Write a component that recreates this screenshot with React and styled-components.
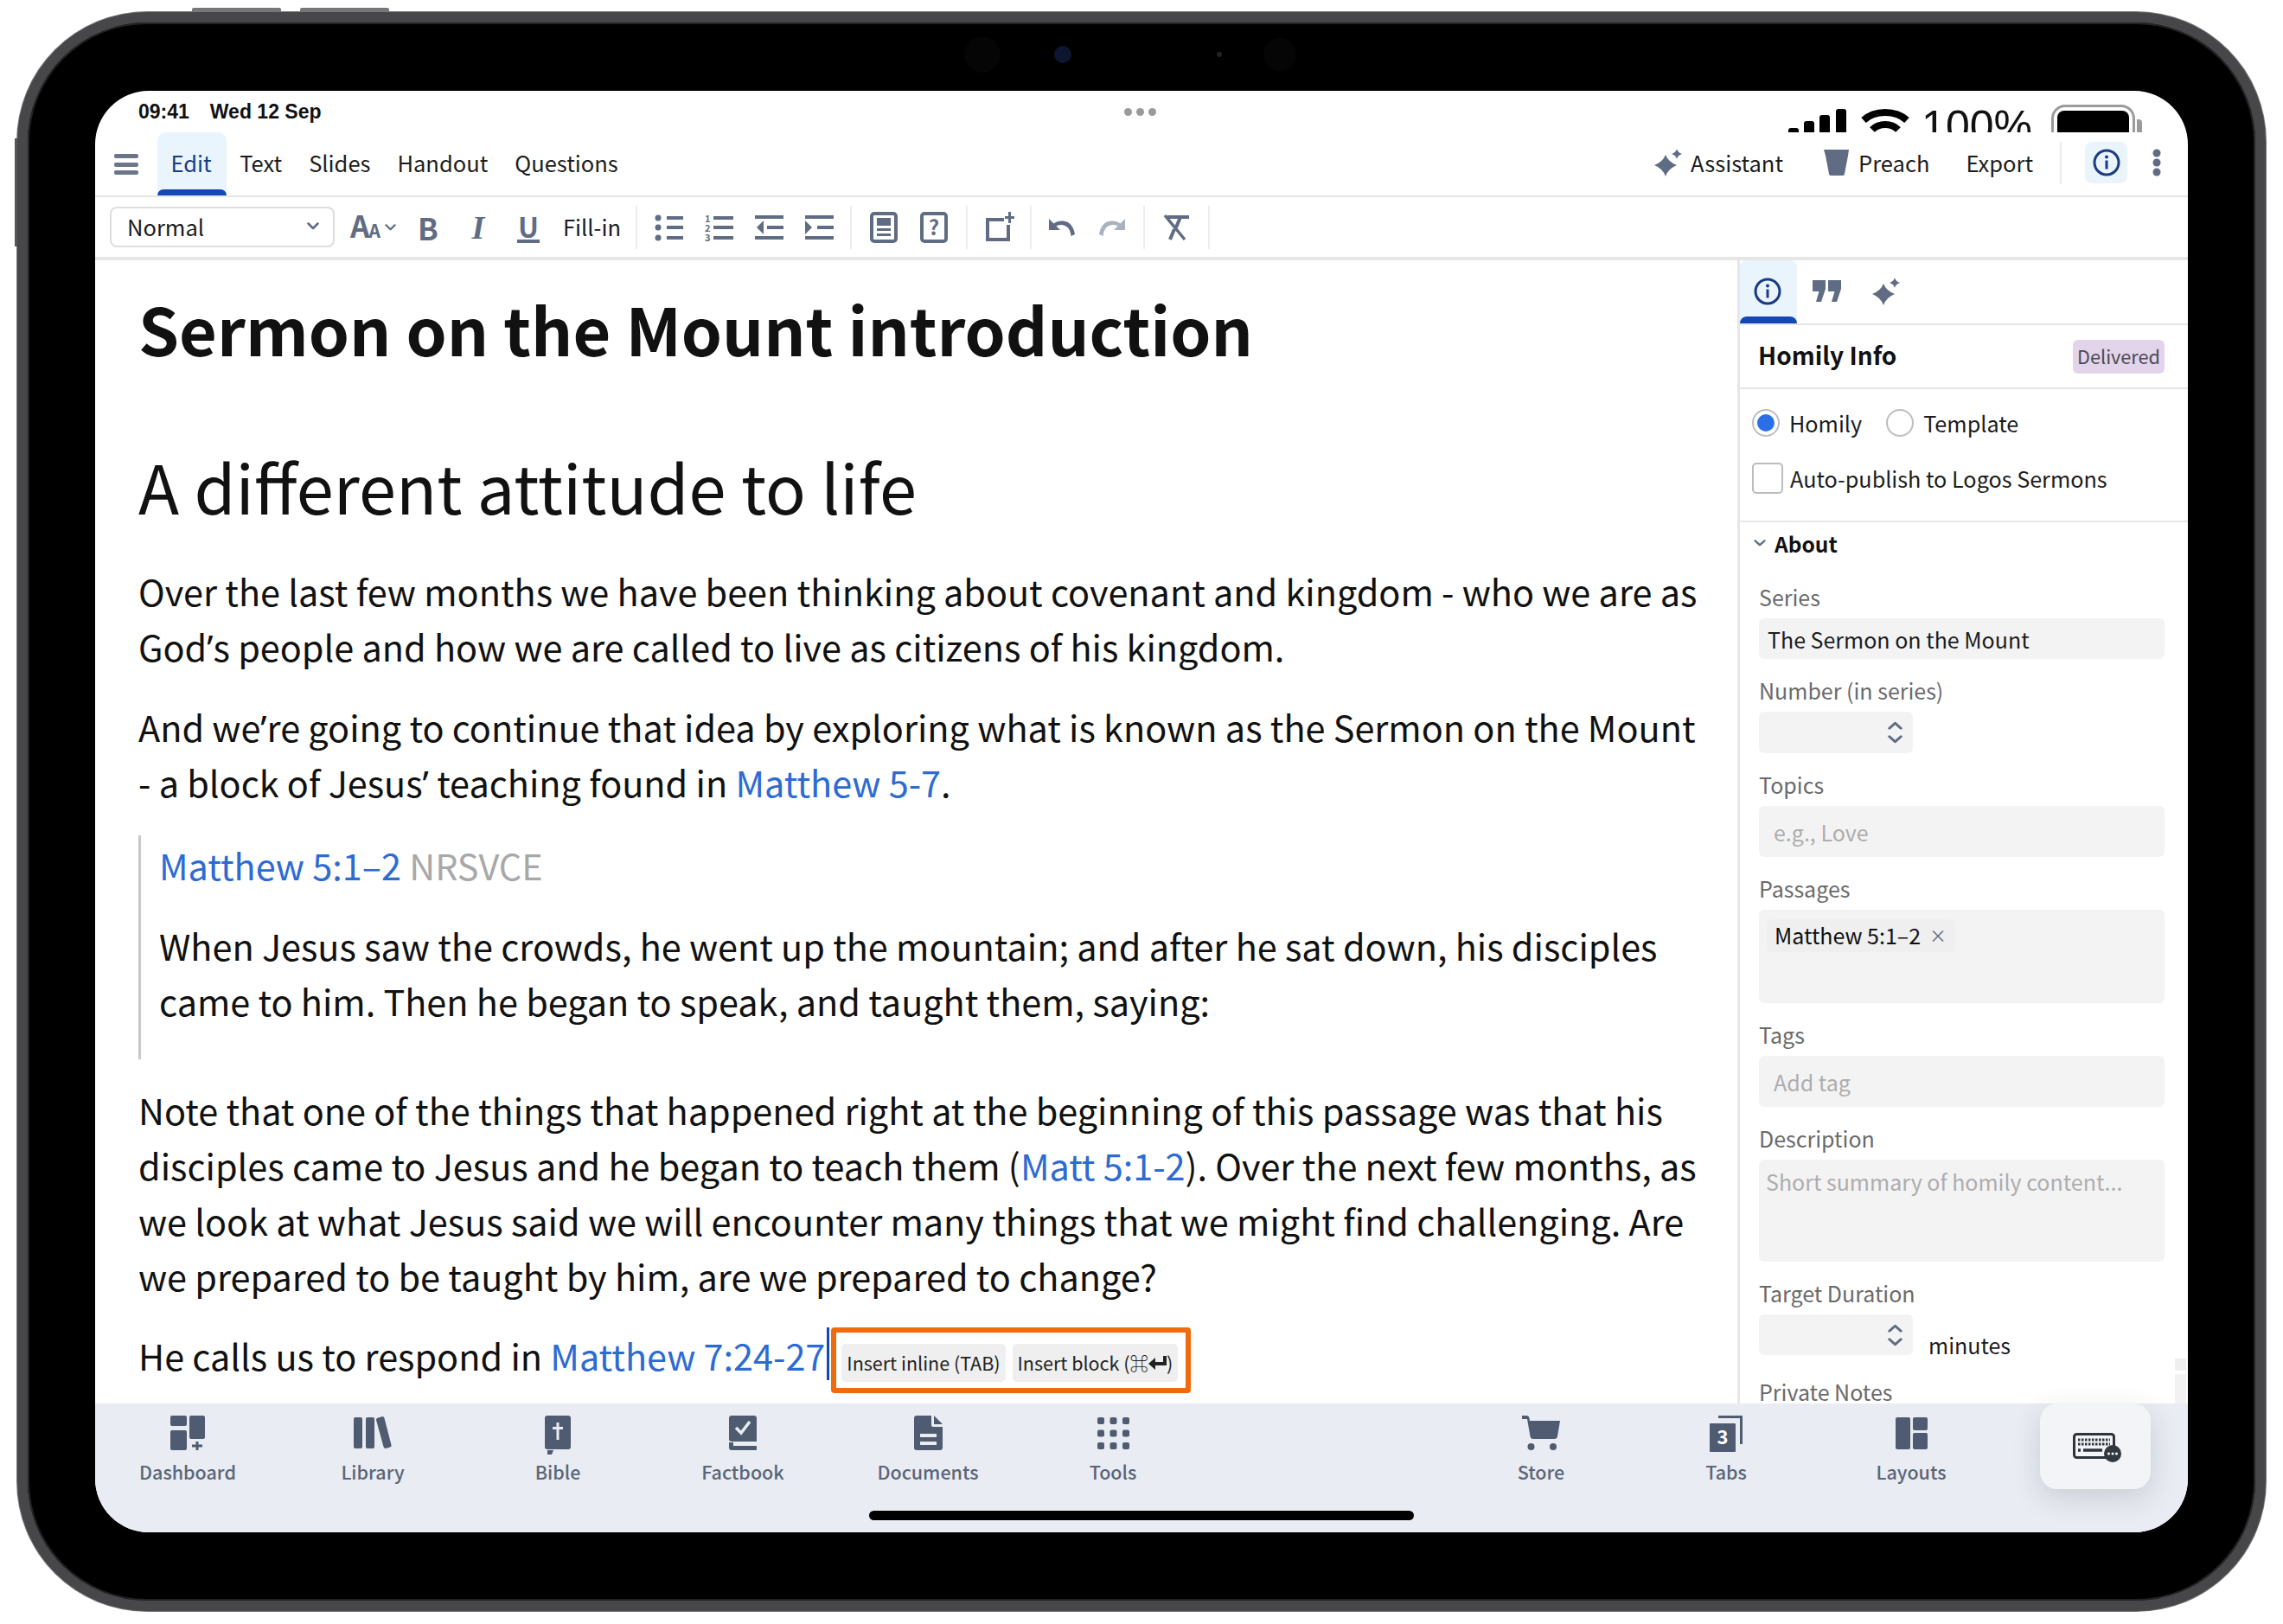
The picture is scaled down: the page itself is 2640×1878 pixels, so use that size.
import React from "react";
import styled, { createGlobalStyle } from "styled-components";

const sans = `"Noto Sans CJK SC", "Noto Sans", sans-serif`;
const slate = "#5f6c83";
const navy = "#1b3b82";
const line = "#e6e6e6";
const link = "#2d6bd3";

const Global = createGlobalStyle`
    html, body {
        margin: 0;
        padding: 0;
        background: #ffffff;
    }
    body {
        width: 2640px;
        height: 1878px;
        overflow: hidden;
        font-family: ${sans};
        color: #111;
    }
    * {
        box-sizing: border-box;
    }
`;

const Device = styled.div`
    position: relative;
    width: 2600px;
    height: 1849px;
    margin: 14px 0 0 20px;
    padding: 79px 78px;
    background: #000;
    border: 12px solid #47474a;
    border-radius: 150px;
    box-shadow: inset 0 0 0 2px #232325, 0 0 0 1px #77777a;
`;

const TopKey = styled.div`
    position: absolute;
    top: -17px;
    left: ${(p) => p.$left}px;
    width: 103px;
    height: 5px;
    background: #77777a;
    border-radius: 2px 2px 0 0;
`;

const SideKey = styled.div`
    position: absolute;
    left: -15px;
    top: 134px;
    width: 3px;
    height: 125px;
    background: #55555a;
`;

const Lens = styled.div`
    position: absolute;
    top: ${(p) => 37 - p.$size / 2}px;
    left: ${(p) => p.$left - p.$size / 2}px;
    width: ${(p) => p.$size}px;
    height: ${(p) => p.$size}px;
    border-radius: 50%;
    background: ${(p) => p.$color};
`;

const Screen = styled.div`
    width: 100%;
    height: 100%;
    background: #fff;
    border-radius: 62px;
    overflow: hidden;
    display: flex;
    flex-direction: column;
`;

const StatusBar = styled.div`
    flex: 0 0 48px;
    height: 48px;
    overflow: hidden;
    display: grid;
    grid-template-columns: 1fr auto 1fr;
    align-items: center;
    padding: 0 53px 0 50px;
`;

const StatusLeft = styled.div`
    display: flex;
    gap: 24px;
    font-family: "Liberation Sans", sans-serif;
    font-size: 23px;
    font-weight: 700;
`;

const Handle = styled.div`
    display: flex;
    gap: 5px;
`;

const HandleDot = styled.span`
    width: 9px;
    height: 9px;
    border-radius: 50%;
    background: #9a9a9a;
`;

const StatusRight = styled.div`
    display: flex;
    justify-content: flex-end;
    align-items: flex-start;
    align-self: start;
    height: 48px;
    padding-top: 16px;
`;

const Percent = styled.span`
    font-family: "Liberation Sans", sans-serif;
    font-size: 50px;
    line-height: 50px;
    margin: 0 22px 0 14px;
`;

const Battery = styled.div`
    display: flex;
    align-items: center;
    height: 60px;
    gap: 2px;
`;

const BatteryShell = styled.div`
    width: 97px;
    height: 60px;
    padding: 4px;
    border: 3px solid #9b9b9b;
    border-radius: 16px;
    &::before {
        content: "";
        display: block;
        height: 100%;
        background: #000;
        border-radius: 8px;
    }
`;

const BatteryCap = styled.div`
    width: 6px;
    height: 26px;
    background: #9b9b9b;
    border-radius: 0 4px 4px 0;
`;

const TabRow = styled.div`
    flex: 0 0 75px;
    height: 75px;
    display: flex;
    align-items: center;
    padding-left: 22px;
    border-bottom: 2px solid ${line};
`;

const Burger = styled.svg`
    color: #6b7688;
    margin-right: 22px;
`;

const Tab = styled.div`
    position: relative;
    align-self: stretch;
    display: flex;
    align-items: center;
    padding: 0 ${(p) => (p.$active ? "17px" : "15.5px")} 3px 15.5px;
    font-size: 25.5px;
    line-height: 36px;
    color: ${(p) => (p.$active ? navy : "#1c1c1c")};
    background: ${(p) => (p.$active ? "#e9f4fd" : "transparent")};
    border-radius: 10px 10px 0 0;
    &::after {
        content: "";
        display: ${(p) => (p.$active ? "block" : "none")};
        position: absolute;
        left: 0;
        right: 0;
        bottom: 0;
        height: 7px;
        background: #1546b5;
        border-radius: 8px 8px 0 0;
    }
`;

const Actions = styled.div`
    margin-left: auto;
    display: flex;
    align-items: center;
    padding-right: 30px;
    padding-bottom: 3px;
`;

const Action = styled.div`
    display: flex;
    align-items: center;
    gap: ${(p) => p.$gap || 10}px;
    margin-right: ${(p) => p.$after}px;
    font-size: 25.5px;
    line-height: 36px;
    color: #1c1c1c;
    svg {
        color: ${slate};
    }
`;

const ActionRule = styled.div`
    width: 2px;
    height: 49px;
    background: #ececec;
    margin-right: 27px;
`;

const InfoButton = styled.div`
    width: 49px;
    height: 48px;
    display: flex;
    align-items: center;
    justify-content: center;
    background: #e9f4fd;
    border-radius: 8px;
    margin-right: 28px;
`;

const Toolbar = styled.div`
    flex: 0 0 73px;
    height: 73px;
    display: flex;
    align-items: center;
    padding-left: 17px;
    border-bottom: 4px solid ${line};
    color: ${slate};
`;

const StyleSelect = styled.div`
    width: 260px;
    height: 47px;
    display: flex;
    align-items: center;
    justify-content: space-between;
    padding: 0 16px 3px 18px;
    border: 2px solid #dedede;
    border-radius: 8px;
    font-size: 25.5px;
    color: #1c1c1c;
    margin-right: 10px;
    svg {
        color: ${slate};
    }
`;

const SizeTool = styled.div`
    width: 69px;
    display: flex;
    align-items: center;
    justify-content: center;
    font-weight: 700;
    line-height: 40px;
    gap: 5px;
`;

const SizeLetters = styled.span`
    display: flex;
    align-items: baseline;
`;

const BigA = styled.span`
    font-size: 35px;
`;

const SmallA = styled.span`
    font-size: 21px;
    margin-left: -1px;
`;

const Tool = styled.div`
    width: 58px;
    height: 50px;
    display: flex;
    align-items: center;
    justify-content: center;
    font-size: 35px;
    line-height: 40px;
    font-weight: 700;
    color: ${(p) => (p.$muted ? "#aab2bf" : slate)};
`;

const BoldGlyph = styled.span`
    font-weight: 700;
`;

const ItalicGlyph = styled.span`
    font-family: "Liberation Serif", serif;
    font-style: italic;
    font-weight: 700;
    font-size: 38px;
`;

const UnderGlyph = styled.span`
    font-weight: 700;
    font-size: 32px;
    line-height: 32px;
    border-bottom: 4px solid ${slate};
    padding: 0 1px;
`;

const FillIn = styled.div`
    font-size: 25.5px;
    color: #1c1c1c;
    margin-left: 11px;
    margin-right: 17px;
    padding-bottom: 3px;
`;

const ToolRule = styled.div`
    width: 2px;
    height: 50px;
    margin: 0 ${(p) => p.$right || 7}px 0 ${(p) => p.$left || 0}px;
    background: #ececec;
`;

const Body = styled.div`
    flex: 1;
    min-height: 0;
    display: flex;
`;

const Editor = styled.div`
    flex: 1;
    min-width: 0;
    padding: 28px 38px 0 50px;
    overflow: hidden;
`;

const Title = styled.h1`
    margin: 0 0 82px;
    font-size: 75.5px;
    line-height: 100px;
    font-weight: 700;
    color: #111;
`;

const Heading = styled.h2`
    margin: 0 0 40px;
    font-size: 77.5px;
    line-height: 100px;
    font-weight: 400;
    color: #111;
`;

const Para = styled.p`
    margin: 0 0 ${(p) => p.$after ?? 29}px;
    font-size: 41.4px;
    line-height: 64px;
    color: #111;
`;

const Apos = styled.span`
    font-family: "Noto Sans", sans-serif;
    line-height: 0;
`;

const Ref = styled.span`
    color: ${link};
`;

const Version = styled.span`
    color: #a8a8a8;
`;

const Quote = styled.blockquote`
    margin: 0 0 26px;
    padding: 2px 0 36px 21px;
    border-left: 3px solid #c9c9c9;
`;

const LastLine = styled.div`
    display: flex;
    align-items: flex-start;
    margin-top: -1px;
    font-size: 41.4px;
    line-height: 64px;
    color: #111;
`;

const TextCaret = styled.span`
    width: 3px;
    height: 61px;
    margin: 0 2px 0 2px;
    background: #1546b5;
`;

const InsertBox = styled.div`
    display: flex;
    align-items: center;
    gap: 8px;
    height: 76px;
    margin: 0;
    padding: 13px 9px 7px 6px;
    border: 6px solid #f06a0e;
    border-radius: 4px;
`;

const InsertButton = styled.div`
    height: 44px;
    display: flex;
    align-items: center;
    padding: 0 6px;
    background: #efefef;
    border-radius: 5px;
    font-size: 21.5px;
    line-height: 30px;
    white-space: nowrap;
    color: #222;
`;

const Panel = styled.div`
    position: relative;
    flex: 0 0 521px;
    border-left: 3px solid ${line};
    overflow: hidden;
`;

const PanelTabs = styled.div`
    height: 75px;
    display: flex;
    border-bottom: 2px solid ${line};
`;

const PanelTab = styled.div`
    position: relative;
    width: 66px;
    height: 73px;
    margin-right: 2px;
    display: flex;
    align-items: center;
    justify-content: center;
    padding: 0 ${(p) => (p.$active ? "3px" : "0")} 2px 0;
    color: ${slate};
    background: ${(p) => (p.$active ? "#e9f4fd" : "transparent")};
    border-radius: 8px 8px 0 0;
    &::after {
        content: "";
        display: ${(p) => (p.$active ? "block" : "none")};
        position: absolute;
        left: 0;
        right: 0;
        bottom: 0;
        height: 8px;
        background: #1546b5;
        border-radius: 8px 8px 0 0;
    }
`;

const PanelHead = styled.div`
    height: 74px;
    display: flex;
    align-items: center;
    justify-content: space-between;
    padding: 0 27px 0 21px;
    border-bottom: 2px solid ${line};
`;

const PanelTitle = styled.div`
    font-size: 28px;
    font-weight: 700;
    color: #111;
    padding-bottom: 5px;
`;

const Badge = styled.div`
    width: 106px;
    height: 39px;
    display: flex;
    align-items: center;
    justify-content: center;
    padding-bottom: 2px;
    background: #e2d4ea;
    border-radius: 6px;
    font-size: 21.7px;
    color: #4a4a55;
`;

const Options = styled.div`
    height: 154px;
    padding: 23px 12px 0 14px;
    border-bottom: 2px solid ${line};
`;

const OptionRow = styled.div`
    display: flex;
    align-items: center;
    height: ${(p) => p.$height}px;
    margin-bottom: ${(p) => p.$after || 0}px;
    font-size: 25.2px;
    color: #1c1c1c;
`;

const Radio = styled.span`
    width: 32px;
    height: 32px;
    margin-right: 11px;
    border-radius: 50%;
    border: 2px solid #bdbdbd;
    display: flex;
    align-items: center;
    justify-content: center;
    &::before {
        content: "";
        width: 20px;
        height: 20px;
        border-radius: 50%;
        background: ${(p) => (p.$on ? "#2b6fe8" : "transparent")};
    }
`;

const RadioLabel = styled.span`
    margin-right: ${(p) => p.$after || 0}px;
`;

const Check = styled.span`
    width: 36px;
    height: 36px;
    margin-right: 8px;
    border: 2px solid #bdbdbd;
    border-radius: 5px;
`;

const SectionHead = styled.div`
    height: 50px;
    display: flex;
    align-items: center;
    gap: 10px;
    padding: 0 0 2px 16px;
    font-size: 24.5px;
    font-weight: 700;
    svg {
        color: ${slate};
    }
`;

const Fields = styled.div`
    display: flex;
    flex-direction: column;
    gap: 22px;
    padding: 22px 27px 0 22px;
`;

const Field = styled.div`
    display: flex;
    flex-direction: column;
    gap: 7px;
`;

const Label = styled.div`
    height: 32px;
    line-height: 28px;
    font-size: 25px;
    color: #6a6a6a;
`;

const Input = styled.div`
    height: ${(p) => p.$height || 59}px;
    display: flex;
    align-items: ${(p) => p.$align || "center"};
    padding: ${(p) => p.$top || 0}px ${(p) => p.$pad || 17}px 0;
    background: #f3f3f4;
    border-radius: 6px;
    font-size: 25px;
    color: ${(p) => (p.$placeholder ? "#adadad" : "#1c1c1c")};
`;

const Stepper = styled.div`
    width: 178px;
    height: ${(p) => p.$height}px;
    display: flex;
    flex-direction: column;
    align-items: flex-end;
    justify-content: center;
    gap: 6px;
    padding-right: 12px;
    background: #f3f3f4;
    border-radius: 6px;
    color: ${slate};
`;

const DurationRow = styled.div`
    display: flex;
    align-items: flex-end;
    gap: 18px;
    margin-bottom: 6px;
`;

const Minutes = styled.span`
    font-size: 25px;
    line-height: 24px;
    color: #1c1c1c;
`;

const Chip = styled.div`
    display: inline-flex;
    align-items: center;
    height: 38px;
    margin-top: 11px;
    padding: 0 10px 2px 9px;
    gap: 10px;
    background: #efeff0;
    border-radius: 6px;
    font-size: 25px;
    color: #111;
`;

const ChipClose = styled.span`
    font-size: 20px;
    color: ${slate};
`;

const ScrollHint = styled.div`
    position: absolute;
    right: 2px;
    bottom: 0;
    width: 13px;
    height: 52px;
    background: linear-gradient(#efefef 0 26%, #fff 26% 34%, #f2f2f2 34%);
`;

const BottomBar = styled.div`
    flex: 0 0 149px;
    height: 149px;
    position: relative;
    display: flex;
    align-items: flex-start;
    padding-right: 43px;
    background: #e9ecf2;
`;

const NavItem = styled.div`
    width: 214px;
    height: 100px;
    display: flex;
    flex-direction: column;
    align-items: center;
    padding-top: 14px;
    color: #4f5b70;
    font-size: 21.5px;
    line-height: 30px;
    font-weight: 500;
`;

const NavIcon = styled.div`
    height: 50px;
    display: flex;
    align-items: flex-start;
`;

const NavLabel = styled.span`
    color: #5a6578;
`;

const NavGap = styled.div`
    flex: 1;
`;

const KeyboardButton = styled.div`
    width: 128px;
    height: 99px;
    margin-left: 42px;
    display: flex;
    align-items: center;
    justify-content: center;
    padding: 2px 0 0 4px;
    background: #f2f4f7;
    border-radius: 20px;
    box-shadow: 0 10px 32px rgba(40, 50, 70, 0.16);
`;

const HomeIndicator = styled.div`
    position: absolute;
    left: 895px;
    bottom: 14px;
    width: 630px;
    height: 11px;
    border-radius: 6px;
    background: #000;
`;

const Sparkle = ({ size = 32 }) => (
    <svg width={size} height={size} viewBox="0 0 32 32" fill="currentColor">
        <path d="M13 7 Q16 15 26 19 Q16 23 13 32 Q10 23 0 19 Q10 15 13 7Z" />
        <path d="M26 0 Q27 4.500 32 6 Q27 7.500 26 12 Q25 7.500 20 6 Q25 4.500 26 0Z" />
    </svg>
);

const InfoIcon = ({ size = 32 }) => (
    <svg width={size} height={size} viewBox="0 0 32 32" fill="none">
        <circle cx="16" cy="16" r="14" stroke={navy} strokeWidth="3" />
        <circle cx="16" cy="9.500" r="2" fill={navy} />
        <rect x="14.500" y="13.500" width="3" height="10" fill={navy} />
    </svg>
);

const Chevron = ({ w = 14, h = 9, up, sw = 2.5 }) => (
    <svg width={w} height={h} viewBox="0 0 14 9" fill="none" preserveAspectRatio="none">
        <path d={up ? "M1.500 7.500 L7 2 L12.500 7.500" : "M1.500 1.500 L7 7 L12.500 1.500"} stroke="currentColor" strokeWidth={sw} strokeLinecap="round" strokeLinejoin="round" />
    </svg>
);

const ReturnArrow = () => (
    <svg width="21" height="16" viewBox="0 0 21 16" fill="#222">
        <path d="M17 0 H21 V11 H8 V16 L0 9 L8 2 V7 H17Z" />
    </svg>
);

const BulletIcon = () => (
    <svg width="33" height="32" viewBox="0 0 33 32" fill="currentColor">
        <circle cx="4" cy="5" r="3.500" />
        <circle cx="4" cy="16" r="3.500" />
        <circle cx="4" cy="28" r="3.500" />
        <rect x="14" y="3" width="19" height="4" />
        <rect x="14" y="14" width="19" height="4" />
        <rect x="14" y="26" width="19" height="4" />
    </svg>
);

const NumberIcon = () => (
    <svg width="33" height="34" viewBox="0 0 33 34" fill="currentColor">
        <text x="0" y="11" fontSize="11" fontFamily={sans}>1</text>
        <text x="0" y="22" fontSize="11" fontFamily={sans}>2</text>
        <text x="0" y="33" fontSize="11" fontFamily={sans}>3</text>
        <rect x="10" y="4" width="23" height="4" />
        <rect x="10" y="15" width="23" height="4" />
        <rect x="10" y="27" width="23" height="4" />
    </svg>
);

const IndentIcon = ({ flip }) => (
    <svg width="33" height="32" viewBox="0 0 33 32" fill="currentColor">
        <rect x="0" y="2" width="33" height="4" />
        <rect x="0" y="26" width="33" height="4" />
        <rect x="14" y="14" width="19" height="4" />
        {flip ? <path d="M0 8 L8 16 L0 24Z" /> : <path d="M10 8 L2 16 L10 24Z" />}
    </svg>
);

const PageIcon = () => (
    <svg width="32" height="36" viewBox="0 0 32 36" fill="none">
        <rect x="2" y="2" width="28" height="32" rx="3" stroke="currentColor" strokeWidth="4" />
        <rect x="8" y="7" width="16" height="9" fill="currentColor" />
        <rect x="8" y="19" width="16" height="3" fill="currentColor" />
        <rect x="8" y="25" width="16" height="3" fill="currentColor" />
    </svg>
);

const QuestionIcon = () => (
    <svg width="32" height="36" viewBox="0 0 32 36" fill="none">
        <rect x="2" y="2" width="28" height="32" rx="3" stroke="currentColor" strokeWidth="4" />
        <text x="16" y="27" textAnchor="middle" fontSize="24" fontWeight="700" fontFamily={sans} fill="currentColor">?</text>
    </svg>
);

const AddBoxIcon = () => (
    <svg width="33" height="36" viewBox="0 0 33 36" fill="currentColor">
        <path d="M0 7 H21 V11 H4 V30 H24 V15 H28 V34 H0Z" />
        <path d="M26 0 H29 V5 H33 V8 H29 V13 H26 V8 H22 V5 H26Z" />
    </svg>
);

const UndoIcon = ({ flip }) => (
    <svg width="32" height="28" viewBox="0 0 32 28" fill="currentColor" style={flip ? { transform: "scaleX(-1)" } : undefined}>
        <path d="M1 4 L1 17 L14 17 L9.500 12.500 C13 10 20 10.500 23.500 15 C25 17 26 20 26.500 24 L31 22 C29.500 13 25 7 17 6.500 C13 6.200 9.500 7.500 6.500 9.500Z" />
    </svg>
);

const ClearIcon = () => (
    <svg width="32" height="32" viewBox="0 0 32 32" fill="none" stroke="currentColor">
        <path d="M5 4 H30" strokeWidth="4" />
        <path d="M20 4 L15 16" strokeWidth="4" />
        <path d="M2 2 L25 30" strokeWidth="3.500" />
        <path d="M13 18 L8 30" strokeWidth="4" />
    </svg>
);

const QuotesIcon = () => (
    <svg width="34" height="25" viewBox="0 0 34 25" fill="currentColor">
        <path d="M0 0 H15 V10 L10 25 H4 L7.500 13 H0Z" />
        <path d="M18 0 H33 V10 L28 25 H22 L25.500 13 H18Z" />
    </svg>
);

const NAV_LEFT = [
    {
        label: "Dashboard",
        icon: (
            <svg width="40" height="40" viewBox="0 0 40 40" fill="currentColor">
                <rect x="0" y="0" width="19" height="12" rx="2" />
                <rect x="0" y="17" width="19" height="23" rx="2" />
                <rect x="22" y="0" width="18" height="27" rx="2" />
                <path d="M29.500 30 H32.500 V33.500 H37 V36.500 H32.500 V40 H29.500 V36.500 H25 V33.500 H29.500Z" />
            </svg>
        ),
    },
    {
        label: "Library",
        icon: (
            <svg width="44" height="38" viewBox="0 0 44 38" fill="currentColor">
                <rect x="0" y="2" width="10" height="36" rx="2" />
                <rect x="14" y="2" width="10" height="36" rx="2" />
                <path d="M27 3 L33 1 Q35 1 35.500 3 L43.500 34 Q44 36 42 36.500 L37 38 Q35 38 34.500 36 L26 5 Q26 3.500 27 3Z" />
            </svg>
        ),
    },
    {
        label: "Bible",
        icon: (
            <svg width="30" height="45" viewBox="0 0 30 45" fill="currentColor">
                <path d="M3 0 H27 Q30 0 30 3 V36 Q30 39 27 39 H3 Q0 39 0 36 V3 Q0 0 3 0Z" />
                <path d="M3 40 H10 L8 45 H3Z" />
                <path d="M13.500 8 H16.500 V13 H21 V16 H16.500 V28 H13.500 V16 H9 V13 H13.500Z" fill="#e9ecf2" />
            </svg>
        ),
    },
    {
        label: "Factbook",
        icon: (
            <svg width="32" height="40" viewBox="0 0 32 40" fill="currentColor">
                <path d="M3 0 H29 Q32 0 32 3 V30 H3 Q0 30 0 27 V3 Q0 0 3 0Z" />
                <path d="M0 31 H5 V35 H32 V40 H3 Q0 40 0 37Z" />
                <path d="M8 14 L14 20 L24 7" stroke="#e9ecf2" strokeWidth="3.500" fill="none" />
            </svg>
        ),
    },
    {
        label: "Documents",
        icon: (
            <svg width="33" height="40" viewBox="0 0 33 40" fill="currentColor">
                <path d="M3 0 H20 V11 Q20 13 22 13 H33 V37 Q33 40 30 40 H3 Q0 40 0 37 V3 Q0 0 3 0Z" />
                <path d="M23 0 L33 10 H23Z" />
                <rect x="7" y="21" width="19" height="4" fill="#e9ecf2" />
                <rect x="7" y="30" width="19" height="4" fill="#e9ecf2" />
            </svg>
        ),
    },
    {
        label: "Tools",
        icon: (
            <svg width="37" height="37" viewBox="0 0 37 37" fill="currentColor" style={{ marginTop: 2 }}>
                {[0, 14.500, 29].map((y) =>
                    [0, 14.500, 29].map((x) => <rect key={`${x}-${y}`} x={x} y={y} width="8" height="8" rx="2" />)
                )}
            </svg>
        ),
    },
];

const NAV_RIGHT = [
    {
        label: "Store",
        icon: (
            <svg width="44" height="41" viewBox="0 0 44 41" fill="currentColor">
                <path d="M0 0 H5 Q8 0 8.500 3 L9 6 H44 L41 24 Q40.500 27 37.500 27 H13 Q10 27 9.500 24 L6 4 H0Z" />
                <circle cx="10.500" cy="36" r="4" />
                <circle cx="36" cy="36" r="4" />
            </svg>
        ),
    },
    {
        label: "Tabs",
        icon: (
            <svg width="38" height="42" viewBox="0 0 38 42" fill="none">
                <path d="M10 1.500 H36.500 V33" stroke="currentColor" strokeWidth="3" />
                <rect x="0" y="9" width="30" height="33" rx="1" fill="currentColor" />
                <text x="15" y="33" textAnchor="middle" fontSize="22" fontWeight="700" fontFamily={sans} fill="#ffffff">3</text>
            </svg>
        ),
    },
    {
        label: "Layouts",
        icon: (
            <svg width="37" height="37" viewBox="0 0 37 37" fill="currentColor" style={{ marginTop: 2 }}>
                <rect x="0" y="0" width="17" height="37" rx="2" />
                <rect x="20" y="0" width="17" height="15" rx="2" />
                <rect x="20" y="18" width="17" height="19" rx="2" />
            </svg>
        ),
    },
];

const renderNav = (item) => (
    <NavItem key={item.label}>
        <NavIcon>{item.icon}</NavIcon>
        <NavLabel>{item.label}</NavLabel>
    </NavItem>
);

export default function App() {
    return (
        <>
            <Global />
            <Device>
                <TopKey $left={190} />
                <TopKey $left={315} />
                <SideKey />
                <Lens $left={1104} $size={42} $color="#050505" />
                <Lens $left={1197} $size={20} $color="#0d1630" />
                <Lens $left={1378} $size={6} $color="#222" />
                <Lens $left={1448} $size={38} $color="#050505" />
                <Screen>
                    <StatusBar>
                        <StatusLeft>
                            <span>09:41</span>
                            <span>Wed 12 Sep</span>
                        </StatusLeft>
                        <Handle>
                            <HandleDot />
                            <HandleDot />
                            <HandleDot />
                        </Handle>
                        <StatusRight>
                            <svg width="67" height="40" viewBox="0 0 67 40" fill="#000" style={{ marginTop: 5, marginRight: 17 }}>
                                <rect x="0" y="22" width="12" height="18" rx="3" />
                                <rect x="18" y="14" width="12" height="26" rx="3" />
                                <rect x="36" y="7" width="12" height="33" rx="3" />
                                <rect x="55" y="0" width="12" height="40" rx="3" />
                            </svg>
                            <svg width="56" height="40" viewBox="0 0 56 40" fill="none" stroke="#000" strokeWidth="8" style={{ marginTop: 4 }}>
                                <path d="M3 14 C16 2 40 2 53 14" />
                                <path d="M13 25 C21 17 35 17 43 25" />
                            </svg>
                            <Percent>100%</Percent>
                            <Battery>
                                <BatteryShell />
                                <BatteryCap />
                            </Battery>
                        </StatusRight>
                    </StatusBar>

                    <TabRow>
                        <Burger width="28" height="24" viewBox="0 0 28 24" fill="currentColor">
                            <rect width="28" height="5" rx="2" />
                            <rect y="10" width="28" height="5" rx="2" />
                            <rect y="19" width="28" height="5" rx="2" />
                        </Burger>
                        <Tab $active>Edit</Tab>
                        <Tab>Text</Tab>
                        <Tab>Slides</Tab>
                        <Tab>Handout</Tab>
                        <Tab>Questions</Tab>
                        <Actions>
                            <Action $after={47}>
                                <Sparkle />
                                Assistant
                            </Action>
                            <Action $after={42} $gap={11}>
                                <svg width="29" height="30" viewBox="0 0 29 30" fill="currentColor">
                                    <path d="M0 0 H29 L28 7 L24 28 Q24 30 22 30 H8 Q6 30 6 28 L2 7Z" />
                                </svg>
                                Preach
                            </Action>
                            <Action $after={31}>Export</Action>
                            <ActionRule />
                            <InfoButton>
                                <InfoIcon />
                            </InfoButton>
                            <svg width="12" height="32" viewBox="0 0 12 32" fill={slate}>
                                <circle cx="6" cy="5" r="4.500" />
                                <circle cx="6" cy="16" r="4.500" />
                                <circle cx="6" cy="27" r="4.500" />
                            </svg>
                        </Actions>
                    </TabRow>

                    <Toolbar>
                        <StyleSelect>
                            Normal
                            <Chevron />
                        </StyleSelect>
                        <SizeTool>
                            <SizeLetters>
                                <BigA>A</BigA>
                                <SmallA>A</SmallA>
                            </SizeLetters>
                            <Chevron w={13} h={8} />
                        </SizeTool>
                        <Tool><BoldGlyph>B</BoldGlyph></Tool>
                        <Tool><ItalicGlyph>I</ItalicGlyph></Tool>
                        <Tool><UnderGlyph>U</UnderGlyph></Tool>
                        <FillIn>Fill-in</FillIn>
                        <ToolRule />
                        <Tool><BulletIcon /></Tool>
                        <Tool><NumberIcon /></Tool>
                        <Tool><IndentIcon /></Tool>
                        <Tool><IndentIcon flip /></Tool>
                        <ToolRule $left={7} $right={8} />
                        <Tool><PageIcon /></Tool>
                        <Tool><QuestionIcon /></Tool>
                        <ToolRule $left={8} $right={8} />
                        <Tool><AddBoxIcon /></Tool>
                        <ToolRule $left={6} $right={6} />
                        <Tool><UndoIcon /></Tool>
                        <Tool $muted><UndoIcon flip /></Tool>
                        <ToolRule $left={7} $right={8} />
                        <Tool><ClearIcon /></Tool>
                        <ToolRule $left={7} />
                    </Toolbar>

                    <Body>
                        <Editor>
                            <Title>Sermon on the Mount introduction</Title>
                            <Heading>A different attitude to life</Heading>
                            <Para>
                                Over the last few months we have been thinking about covenant and kingdom - who we are as God<Apos>’</Apos>s people and how we are called to live as citizens of his kingdom.
                            </Para>
                            <Para $after={30}>
                                And we<Apos>’</Apos>re going to continue that idea by exploring what is known as the Sermon on the Mount - a block of Jesus<Apos>’</Apos> teaching found in <Ref>Matthew 5-7</Ref>.
                            </Para>
                            <Quote>
                                <Para>
                                    <Ref>Matthew 5:1–2</Ref> <Version>NRSVCE</Version>
                                </Para>
                                <Para $after={0}>
                                    When Jesus saw the crowds, he went up the mountain; and after he sat down, his disciples came to him. Then he began to speak, and taught them, saying:
                                </Para>
                            </Quote>
                            <Para>
                                Note that one of the things that happened right at the beginning of this passage was that his disciples came to Jesus and he began to teach them (<Ref>Matt 5:1-2</Ref>). Over the next few months, as we look at what Jesus said we will encounter many things that we might find challenging. Are we prepared to be taught by him, are we prepared to change?
                            </Para>
                            <LastLine>
                                <span>He calls us to respond in <Ref>Matthew 7:24-27</Ref></span>
                                <TextCaret />
                                <InsertBox>
                                    <InsertButton>Insert inline (TAB)</InsertButton>
                                    <InsertButton>Insert block (⌘<ReturnArrow />)</InsertButton>
                                </InsertBox>
                            </LastLine>
                        </Editor>

                        <Panel>
                            <PanelTabs>
                                <PanelTab $active><InfoIcon /></PanelTab>
                                <PanelTab><QuotesIcon /></PanelTab>
                                <PanelTab><Sparkle size={32} /></PanelTab>
                            </PanelTabs>
                            <PanelHead>
                                <PanelTitle>Homily Info</PanelTitle>
                                <Badge>Delivered</Badge>
                            </PanelHead>
                            <Options>
                                <OptionRow $height={32} $after={30}>
                                    <Radio $on />
                                    <RadioLabel $after={28}>Homily</RadioLabel>
                                    <Radio />
                                    <RadioLabel>Template</RadioLabel>
                                </OptionRow>
                                <OptionRow $height={36}>
                                    <Check />
                                    Auto-publish to Logos Sermons
                                </OptionRow>
                            </Options>
                            <SectionHead>
                                <Chevron w={14} h={8} />
                                About
                            </SectionHead>
                            <Fields>
                                <Field>
                                    <Label>Series</Label>
                                    <Input $height={47} $pad={10}>The Sermon on the Mount</Input>
                                </Field>
                                <Field>
                                    <Label>Number (in series)</Label>
                                    <Stepper $height={48}>
                                        <Chevron up w={17} h={10} />
                                        <Chevron w={17} h={10} />
                                    </Stepper>
                                </Field>
                                <Field>
                                    <Label>Topics</Label>
                                    <Input $placeholder>e.g., Love</Input>
                                </Field>
                                <Field>
                                    <Label>Passages</Label>
                                    <Input $height={108} $align="flex-start" $pad={9}>
                                        <Chip>
                                            Matthew 5:1–2
                                            <ChipClose>×</ChipClose>
                                        </Chip>
                                    </Input>
                                </Field>
                                <Field>
                                    <Label>Tags</Label>
                                    <Input $placeholder>Add tag</Input>
                                </Field>
                                <Field>
                                    <Label>Description</Label>
                                    <Input $placeholder $height={118} $align="flex-start" $pad={8} $top={7}>
                                        Short summary of homily content...
                                    </Input>
                                </Field>
                                <Field>
                                    <Label>Target Duration</Label>
                                    <DurationRow>
                                        <Stepper $height={47}>
                                            <Chevron up w={17} h={10} />
                                            <Chevron w={17} h={10} />
                                        </Stepper>
                                        <Minutes>minutes</Minutes>
                                    </DurationRow>
                                </Field>
                                <Field>
                                    <Label>Private Notes</Label>
                                </Field>
                            </Fields>
                            <ScrollHint />
                        </Panel>
                    </Body>

                    <BottomBar>
                        {NAV_LEFT.map(renderNav)}
                        <NavGap />
                        {NAV_RIGHT.map(renderNav)}
                        <KeyboardButton>
                            <svg width="56" height="34" viewBox="0 0 56 34" fill="none">
                                <rect x="1.500" y="1.500" width="46" height="27" rx="3" stroke="#2f333a" strokeWidth="3" />
                                <path d="M6 8 H43 M6 13 H43" stroke="#2f333a" strokeWidth="3" strokeDasharray="2.500 1.500" />
                                <path d="M6 20 H9 M12 20 H34" stroke="#2f333a" strokeWidth="3.500" />
                                <circle cx="46" cy="24" r="10" fill="#33373e" />
                                <circle cx="41.500" cy="24" r="1.500" fill="#fff" />
                                <circle cx="46" cy="24" r="1.500" fill="#fff" />
                                <circle cx="50.500" cy="24" r="1.500" fill="#fff" />
                            </svg>
                        </KeyboardButton>
                        <HomeIndicator />
                    </BottomBar>
                </Screen>
            </Device>
        </>
    );
}
